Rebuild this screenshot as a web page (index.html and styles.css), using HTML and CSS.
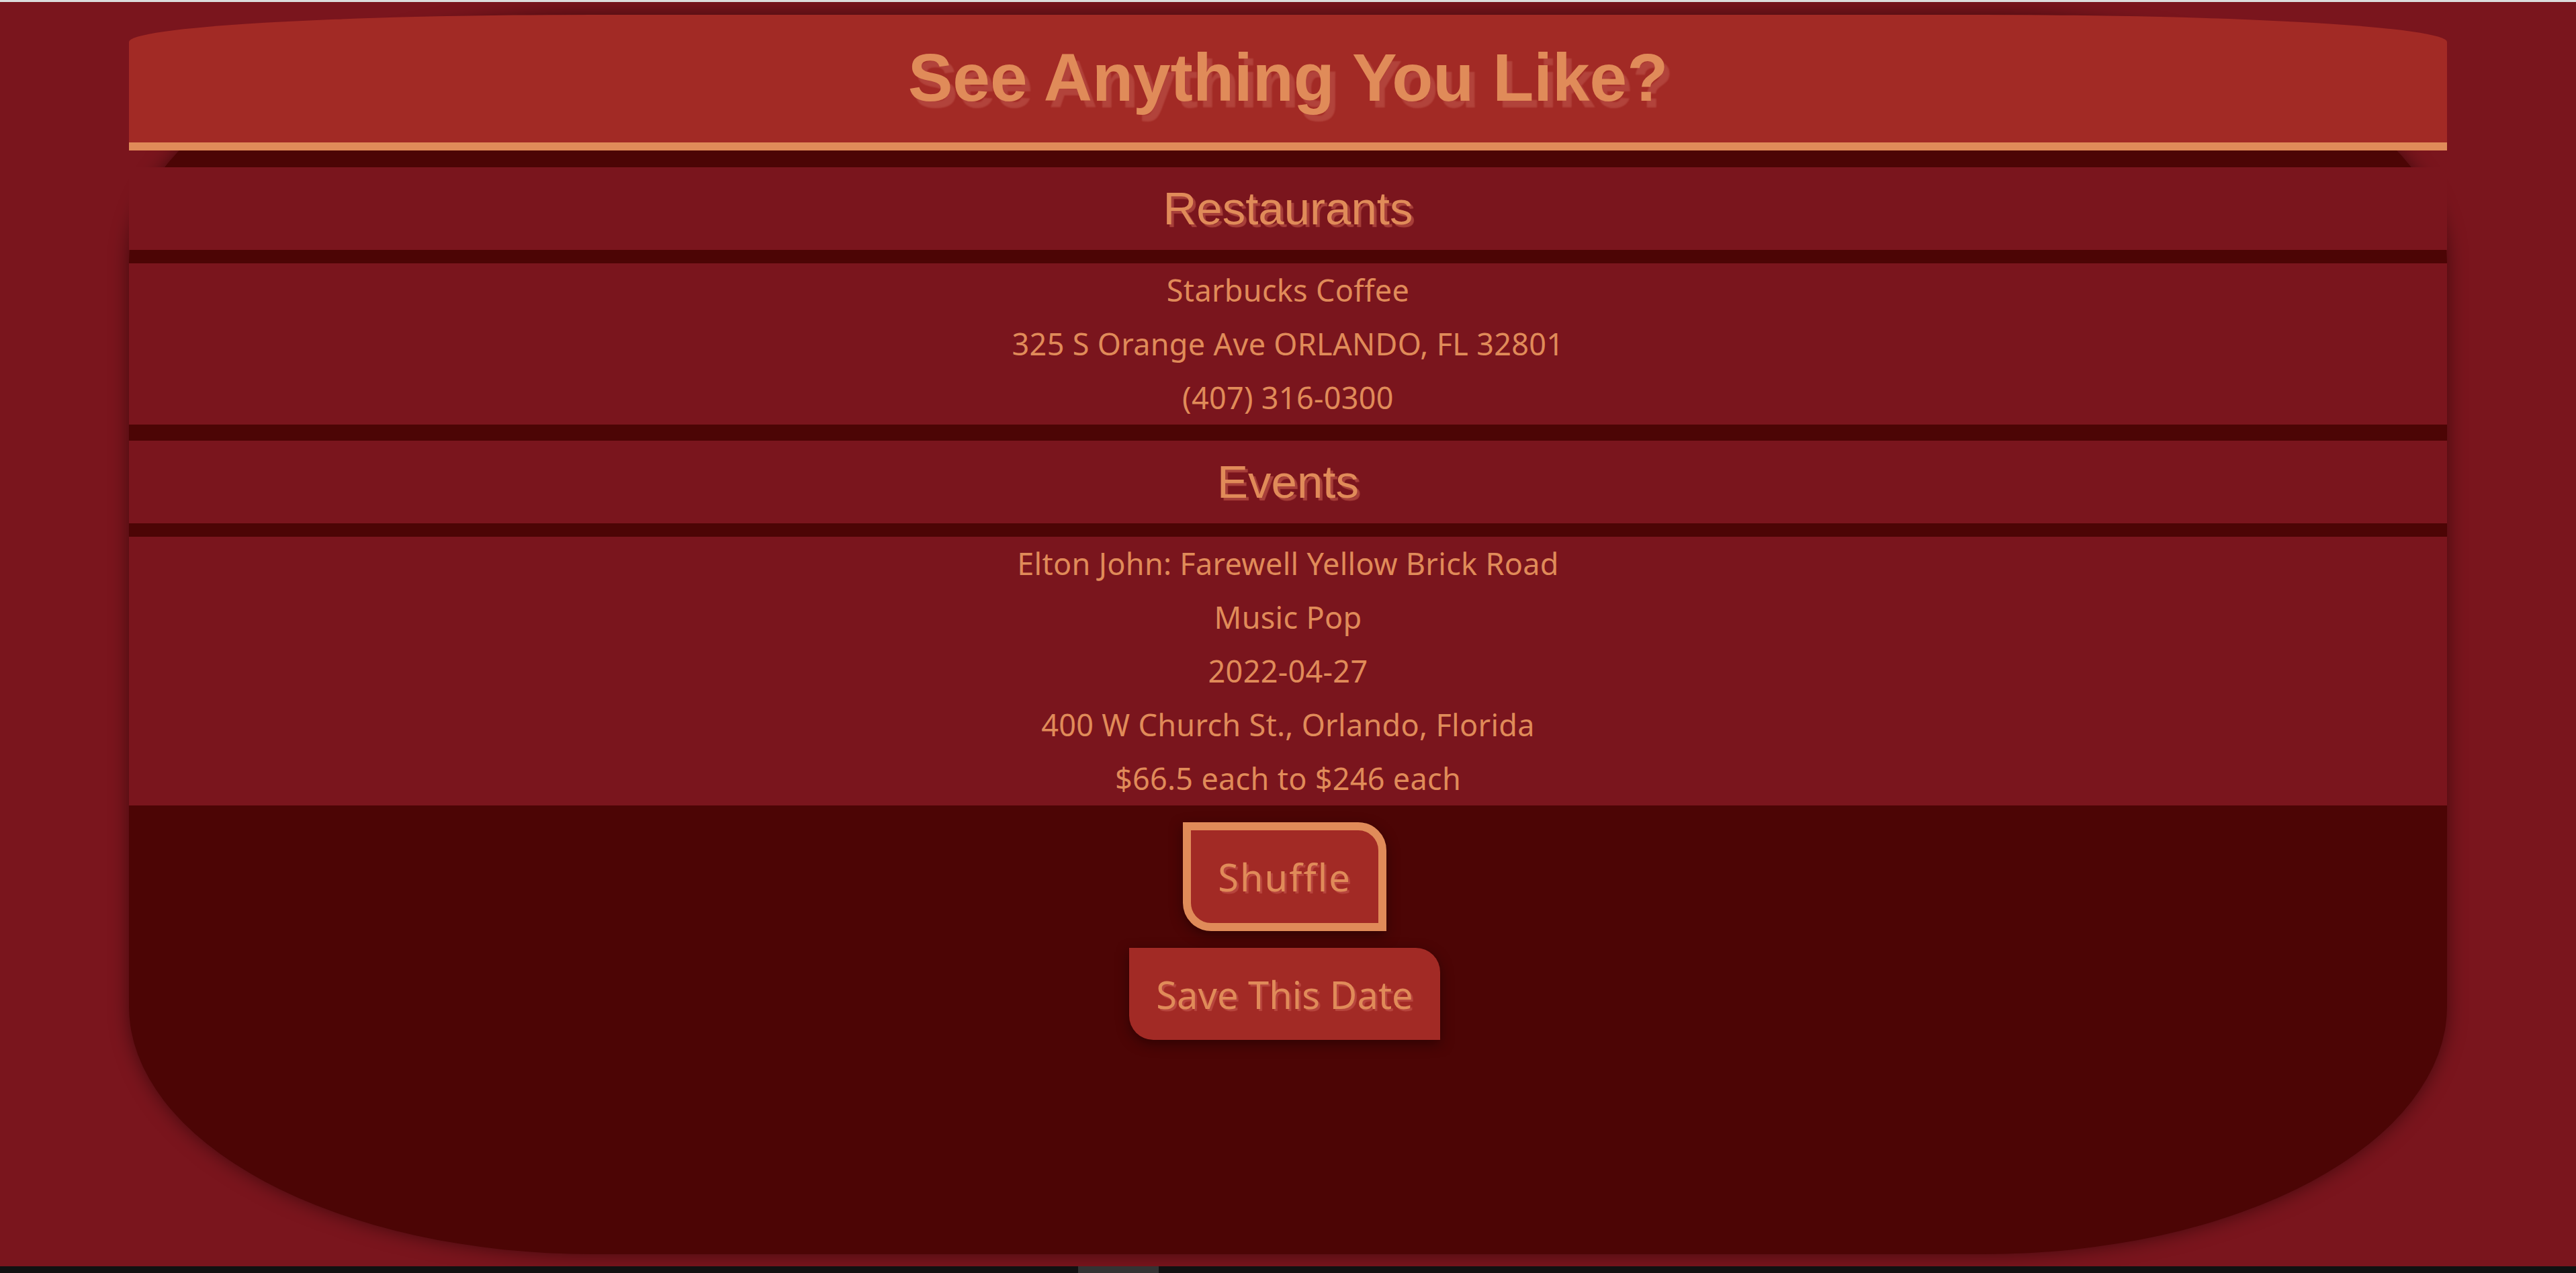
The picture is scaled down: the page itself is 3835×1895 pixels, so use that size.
FILE: index.html
```html
<!DOCTYPE html>
<html lang="en">
<head>
<meta charset="utf-8">
<title>See Anything You Like?</title>
<link rel="stylesheet" href="styles.css">
</head>
<body>
<main class="card">
  <header class="card-header">
    <h1 class="title">See Anything You Like?</h1>
  </header>
  <div class="notch"></div>
  <section class="block">
    <h2 class="block-title">Restaurants</h2>
    <div class="block-info info-3">
      <p>Starbucks Coffee</p>
      <p>325 S Orange Ave ORLANDO, FL 32801</p>
      <p>(407) 316-0300</p>
    </div>
  </section>
  <section class="block">
    <h2 class="block-title">Events</h2>
    <div class="block-info info-5">
      <p>Elton John: Farewell Yellow Brick Road</p>
      <p>Music Pop</p>
      <p>2022-04-27</p>
      <p>400 W Church St., Orlando, Florida</p>
      <p>$66.5 each to $246 each</p>
    </div>
  </section>
  <div class="actions">
    <button class="btn btn-shuffle">Shuffle</button>
    <button class="btn btn-save">Save This Date</button>
  </div>
</main>
<div class="strip"><span class="strip-thumb"></span></div>
</body>
</html>
```

FILE: styles.css
```css
html, body {
  margin: 0;
  padding: 0;
}
body {
  background: #7a151d;
  border-top: 3px solid #dcdcdc;
  font-family: "Noto Sans", "Open Sans", sans-serif;
  color: #e08b59;
}
.card {
  width: 90%;
  height: 1845px;
  margin: 19px auto 18px;
  background: #4c0505;
  border-radius: 20%;
  box-shadow: 0 0 28px rgba(20, 0, 0, 0.55);
  display: flex;
  flex-direction: column;
}
.card-header {
  height: 190px;
  flex: none;
  background: #a22a25;
  border-bottom: 12px solid #e08b59;
  border-radius: 20% 20% 0 0;
  display: flex;
  align-items: center;
  justify-content: center;
}
.title {
  margin: 0;
  font-family: "Liberation Sans", Arial, sans-serif;
  font-weight: bold;
  font-size: 100px;
  line-height: 1;
  color: #e08b59;
  text-shadow: 8px 10px 2px #b2433b;
  padding-bottom: 4px;
}
.notch {
  height: 25px;
  flex: none;
}
.block {
  display: flex;
  flex-direction: column;
}
.block + .block {
  margin-top: 24px;
}
.block-title {
  margin: 0;
  height: 123px;
  background: #7a151d;
  display: flex;
  align-items: center;
  justify-content: center;
  font-family: "Liberation Sans", Arial, sans-serif;
  font-weight: normal;
  font-size: 69px;
  color: #e08b59;
  text-shadow: 4px 4px 1px #a8403a;
}
.block-info {
  margin-top: 20px;
  background: #7a151d;
  display: flex;
  flex-direction: column;
  align-items: center;
}
.block-info p {
  margin: 0;
  height: 80px;
  line-height: 80px;
  font-size: 45px;
  letter-spacing: 0.3px;
}
.actions {
  display: flex;
  flex-direction: column;
  align-items: center;
  padding-top: 25px;
  padding-right: 10px;
  gap: 25px;
}
.btn {
  font-family: "Noto Sans", "Open Sans", sans-serif;
  font-size: 56px;
  color: #e08b59;
  background: #a22a25;
  border: none;
  height: 137px;
  padding: 0 40px;
  border-radius: 0 36px 0 36px;
  text-shadow: 3px 3px 1px #b8463e;
  box-shadow: 0 6px 18px rgba(20, 0, 0, 0.5);
  cursor: pointer;
}
.btn-shuffle {
  height: 162px;
  border: 12px solid #e08b59;
  border-radius: 0 42px 0 42px;
  letter-spacing: 2px;
}
.strip {
  height: 10px;
  background: #111111;
  display: flex;
}
.strip-thumb {
  width: 120px;
  margin-left: 1605px;
  background: #333333;
}
```
